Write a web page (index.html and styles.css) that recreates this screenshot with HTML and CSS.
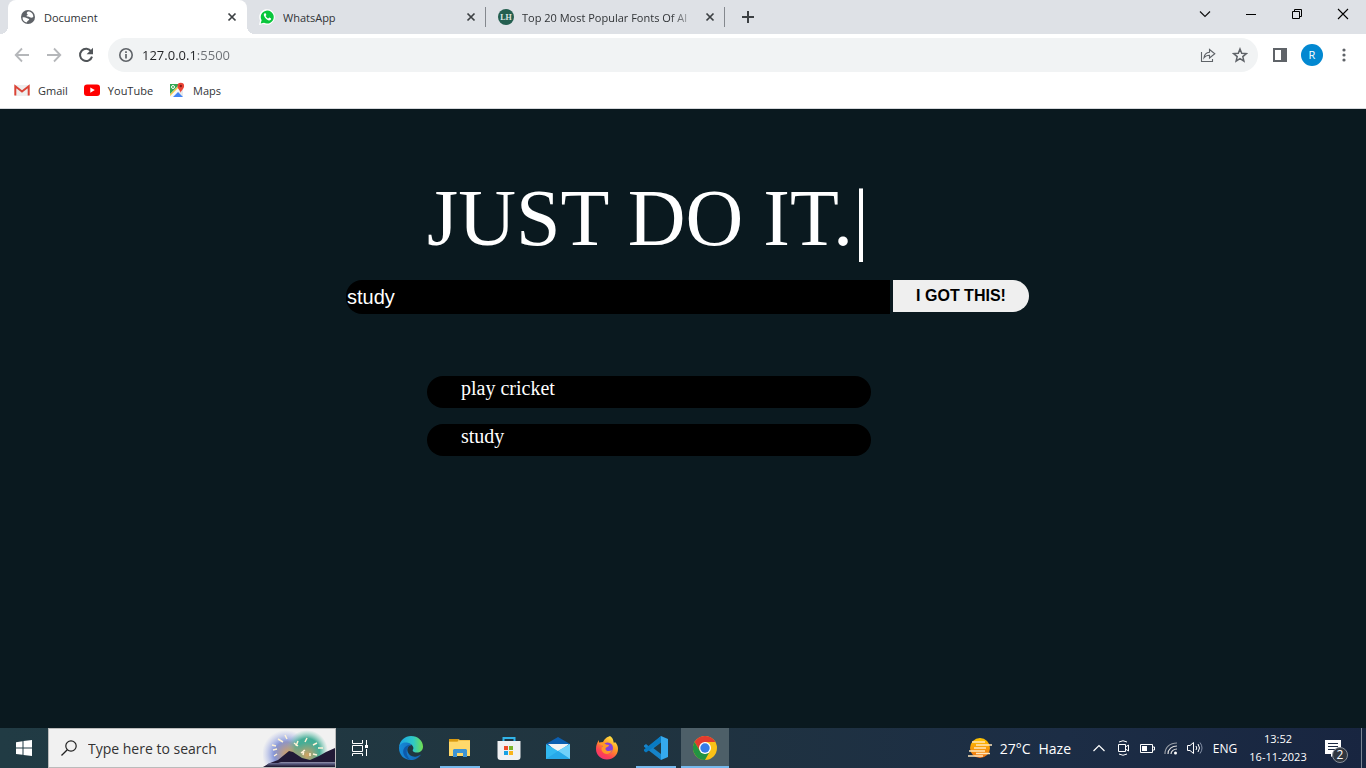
FILE: index.html
```html
<!DOCTYPE html>
<html lang="en">
<head>
<meta charset="utf-8">
<title>Document</title>
<link rel="stylesheet" href="styles.css">
</head>
<body>
<header class="browser">
  <div class="tabstrip">
    <div class="tab tab-active">
      <svg class="icon16" viewBox="0 0 16 16"><circle cx="8" cy="8" r="7" fill="#5f6368"/><path d="M2.500 8.500C4 8.200 5.500 8.300 6.500 9s1.700.4 2.500 1-.6 1.400-1.300 1.900-.7 1.100-1.200 1.500C4 12.800 2.500 11 2.500 8.500zM8 2.500c-1 .8-1.800 1.600-.9 2.200 1 .6.500 1.500-.4 1.700-.7.400.2 1.100 1.200 1 1.300-.1 1.900.9 2.800 1.200.9.300 1.700-.3 2.600-.6C13.500 5 11.500 2.500 8 2.500z" fill="#fff"/></svg>
      <span class="tab-title">Document</span>
      <button class="tab-close" aria-label="Close Document"><svg class="icon16" viewBox="0 0 16 16"><path d="M4.500 4.500l7 7m0-7l-7 7" stroke="#3c4043" stroke-width="1.700"/></svg></button>
    </div>
    <div class="tab">
      <svg class="icon16" viewBox="0 0 16 16"><path d="M0 16l1-4.500A7.800 7.800 0 1 1 4.500 15z" fill="#fff"/><path d="M1.700 14.500l.9-3.200A6.500 6.500 0 1 1 5 13.700z" fill="#09c63c"/><path d="M5.700 4.200c-1 .6-1.100 1.700-.6 2.800 1 2.200 2.500 3.700 4.700 4.400 1.100.3 2.400-.6 2.300-1.900L10.300 8.500l-1 1.100c-1.200-.4-2.200-1.400-2.700-2.600l.8-.9-.8-1.900z" fill="#fff"/></svg>
      <span class="tab-title">WhatsApp</span>
      <button class="tab-close" aria-label="Close WhatsApp"><svg class="icon16" viewBox="0 0 16 16"><path d="M4.500 4.500l7 7m0-7l-7 7" stroke="#3c4043" stroke-width="1.700"/></svg></button>
    </div>
    <div class="tab">
      <svg class="icon16" viewBox="0 0 16 16"><circle cx="8" cy="8" r="8" fill="#245f50"/><text class="lh" x="8" y="11" text-anchor="middle">LH</text></svg>
      <span class="tab-title tab-fade">Top 20 Most Popular Fonts Of Al</span>
      <button class="tab-close" aria-label="Close fonts tab"><svg class="icon16" viewBox="0 0 16 16"><path d="M4.500 4.500l7 7m0-7l-7 7" stroke="#3c4043" stroke-width="1.700"/></svg></button>
    </div>
    <button class="tab-new" aria-label="New tab"><svg class="icon16" viewBox="0 0 16 16"><path d="M8 2v12M2 8h12" stroke="#3c4043" stroke-width="2"/></svg></button>
    <div class="window-controls">
      <button aria-label="Search tabs"><svg class="icon16" viewBox="0 0 16 16"><path d="M3 5.500l5 5 5-5" fill="none" stroke="#111" stroke-width="1.200"/></svg></button>
      <button aria-label="Minimize"><svg class="icon16" viewBox="0 0 16 16"><path d="M3 8.500h10" stroke="#000"/></svg></button>
      <button aria-label="Restore"><svg class="icon16" viewBox="0 0 16 16"><path d="M3.500 5.500h7v7h-7zM5.500 5V3.500h7v7H11" fill="none" stroke="#000"/></svg></button>
      <button aria-label="Close"><svg class="icon16" viewBox="0 0 16 16"><path d="M3 3l10 10M13 3L3 13" stroke="#000" stroke-width="1.100"/></svg></button>
    </div>
  </div>
  <nav class="toolbar" aria-label="Browser">
    <button class="tool" aria-label="Back"><svg class="icon16" viewBox="0 0 16 16"><path d="M15 8H2M8 1.500L1.700 8 8 14.500" fill="none" stroke="#b5b7ba" stroke-width="1.800"/></svg></button>
    <button class="tool" aria-label="Forward"><svg class="icon16" viewBox="0 0 16 16"><path d="M1 8h13M8 1.500L14.300 8 8 14.500" fill="none" stroke="#b5b7ba" stroke-width="1.800"/></svg></button>
    <button class="tool" aria-label="Reload"><svg class="icon16" viewBox="0 0 16 16"><path d="M13.200 4.500A6.100 6.100 0 1 0 14 9.600" fill="none" stroke="#505458" stroke-width="2"/><path d="M15 .8v6.400H8.600z" fill="#505458"/></svg></button>
    <div class="omnibox">
      <svg class="icon16" viewBox="0 0 16 16"><circle cx="8" cy="8" r="6.200" fill="none" stroke="#5f6368" stroke-width="1.600"/><path d="M8 7v4.500M8 4.300v1.700" stroke="#5f6368" stroke-width="1.700"/></svg>
      <input class="address" type="text" aria-label="Address" value="127.0.0.1:5500">
      <button class="tool" aria-label="Share"><svg class="icon16" viewBox="0 0 16 16"><path d="M1.500 5v9.500h11V12M4 10.800c.4-3.500 2.300-5.300 5.500-5.500V2.500l5.300 4.300-5.300 4.200V8.200C7 8.200 5.300 9 4 10.800z" fill="none" stroke="#5f6368" stroke-width="1.100"/></svg></button>
      <button class="tool" aria-label="Bookmark"><svg class="icon16" viewBox="0 0 16 16"><path d="M8 2l1.700 4.300 4.600.3-3.500 3 1.100 4.500L8 11.600l-3.900 2.500 1.100-4.500-3.500-3 4.600-.3z" fill="none" stroke="#5f6368" stroke-width="1.500"/></svg></button>
    </div>
    <button class="tool" aria-label="Side panel"><svg class="icon16" viewBox="0 0 16 16"><path d="M1 1h14v14H1zM3 3v10h6V3z" fill="#5f6368" fill-rule="evenodd"/></svg></button>
    <button class="tool" aria-label="Profile"><span class="avatar">R</span></button>
    <button class="tool" aria-label="Menu"><svg class="icon16" viewBox="0 0 16 16"><g fill="#5f6368"><circle cx="8" cy="3" r="1.600"/><circle cx="8" cy="8" r="1.600"/><circle cx="8" cy="13" r="1.600"/></g></svg></button>
  </nav>
  <nav class="bookmarks" aria-label="Bookmarks">
    <a href="#gmail"><svg class="icon16" viewBox="0 0 16 16"><path d="M1 3h14v11H1z" fill="#eee"/><path d="M1.300 13.500V4.300L8 9.500l6.700-5.200v9.200" fill="none" stroke="#db4437" stroke-width="2"/></svg>Gmail</a>
    <a href="#youtube"><svg class="icon16" viewBox="0 0 16 16"><rect y="2.500" width="16" height="11.500" rx="3" fill="#f00"/><path d="M6.300 5.500v5.200L10.800 8z" fill="#fff"/></svg>YouTube</a>
    <a href="#maps"><svg class="icon16" viewBox="0 0 16 16"><rect x="1" y="2" width="13" height="13" rx="1" fill="#e8eaed"/><path d="M1 2h10L1 12z" fill="#34a853"/><path d="M3 15l5.500-5.500L14 15z" fill="#4285f4"/><path d="M1 12.500L10.500 3l1.500 1.500L1.500 15H1z" fill="#fbc02d"/><path d="M1 14L9 6l2 2-7 7H1z" fill="#f6f7f8"/><circle cx="4" cy="5" r="1.500" fill="none" stroke="#fff"/><path d="M11.700 11C11.500 8.500 8.500 7 8.500 4a3.300 3.300 0 0 1 6.600 0c0 3-3.200 4.500-3.400 7z" fill="#ea4335"/><circle cx="11.800" cy="4" r="1.200" fill="#891a15"/></svg>Maps</a>
  </nav>
</header>

<main class="page">
  <div class="todo">
    <h1 class="headline">JUST DO IT.|</h1>
    <form class="entry">
      <input class="entry-text" type="text" aria-label="Task" value="study">
      <button class="entry-add" type="button">I GOT THIS!</button>
    </form>
    <ul class="tasks">
      <li>play cricket</li>
      <li>study</li>
    </ul>
  </div>
</main>

<footer class="taskbar">
  <button class="start" aria-label="Start"><svg class="icon16" viewBox="0 0 16 16"><path d="M0 2.200l6.500-1V7.500H0zM7.500 1L16 0v7.500H7.500zM0 8.500h6.500v6.300L0 13.900zM7.500 8.500H16V16l-8.500-1.100z" fill="#fff"/></svg></button>
  <label class="search">
    <svg class="icon16" viewBox="0 0 16 16"><circle cx="10" cy="6" r="5.200" fill="none" stroke="#222" stroke-width="1.200"/><path d="M6.300 9.700L.5 15.500" stroke="#222" stroke-width="1.300"/></svg>
    <input type="text" aria-label="Search" placeholder="Type here to search">
    <svg class="fireworks" viewBox="0 0 72 38">
      <defs>
        <radialGradient id="blue"><stop offset=".5" stop-color="#8294d9"/><stop offset="1" stop-color="#a9b4e8" stop-opacity="0"/></radialGradient>
        <radialGradient id="green"><stop offset=".6" stop-color="#45ad96"/><stop offset="1" stop-color="#74c7b3" stop-opacity="0"/></radialGradient>
        <radialGradient id="glow"><stop offset="0" stop-color="#d6a35f"/><stop offset="1" stop-color="#c79a6d" stop-opacity="0"/></radialGradient>
        <linearGradient id="lake" x2="0" y2="1"><stop stop-color="#6d7096"/><stop offset="1" stop-color="#171329"/></linearGradient>
      </defs>
      <circle cx="23" cy="25" r="24" fill="url(#blue)"/><circle cx="44" cy="22" r="21" fill="url(#green)"/><circle cx="25" cy="25" r="15" fill="url(#glow)"/><circle cx="44" cy="26" r="13" fill="url(#glow)"/>
      <path d="M0 38l7-4 8-3 11-9 4 1 9 6 8 2 9-4 7-4 9-4v19z" fill="#211a36"/>
      <path d="M6 34h66v4H2z" fill="url(#lake)"/><path d="M18 33h54v1H15z" fill="#8585a0"/>
      <path d="M15 10l5 3M9 16l4 1M10 21l4-1M11 27l3-2M22 6l2 4M44 9l-2 4M54 14l-4 2M60 19h-5M54 26l-4-1M31 14l4 3M35 12l-2 5M38 24l4-3M41 21l-1 5M47 24v3" stroke="#fff3d7" stroke-width="1.500"/>
    </svg>
  </label>
  <div class="apps">
    <button class="app" aria-label="Task view"><svg class="icon24" viewBox="0 0 24 24"><path d="M4.500 4v3.500h10V4M4.500 9.500h10v6h-10zM4.500 20v-2.500h10V20M18.500 4v5M18.500 13v7" fill="none" stroke="#fff"/><path d="M17 9h3v3h-3z" fill="#fff"/></svg></button>
    <button class="app app-first" aria-label="Edge"><svg class="icon24" viewBox="0 0 24 24"><defs><linearGradient id="edgeTop"><stop stop-color="#1aa4e8"/><stop offset=".6" stop-color="#2fc9c5"/><stop offset="1" stop-color="#72e04f"/></linearGradient><linearGradient id="edgeBase"><stop stop-color="#168bd9"/><stop offset="1" stop-color="#1260ae"/></linearGradient></defs><path d="M0 11C1 4 6 0 12 0c7 0 12 5 12 10.500 0 4-3 6-6 6-3.500 0-5-1.500-4-3 1.500-2-1-6-5.500-6C4 7.500 1 9 0 11z" fill="url(#edgeTop)"/><path d="M0 12c0-4 4-6 8-5.500 2.500.3 4 1.500 4.500 2.500-3 0-4.500 3-4 6 .8 4 5 6.500 9 5.500 1.800-.4 3.500-1.500 4.500-2C20 22 16 24 12 24 5 24 0 19 0 12z" fill="url(#edgeBase)"/><path d="M12.300 9.200c-5 .3-7 8.800-.8 14.800-4.500-1-8.500-5.500-7-10.500 1-3 4.500-5 7.800-4.300z" fill="#0d5aab"/></svg></button>
    <button class="app app-open" aria-label="File Explorer"><svg class="icon24" viewBox="0 0 24 24"><path d="M1 3h9l2 1h10v16H1z" fill="#f5c34b"/><path d="M1 3h9v2.500H1z" fill="#d99a10"/><path d="M1 6h8l2-1h11v15H1z" fill="#ffd96b"/><path d="M5 21v-7l1-1h12l1 1v7h-4v-4H9v4z" fill="#3d94d5"/></svg></button>
    <button class="app" aria-label="Store"><svg class="icon24" viewBox="0 0 24 24"><path d="M6.500 6V2h11v4" fill="none" stroke="#31b4e8" stroke-width="2"/><path d="M.5 5h23v16a3 3 0 0 1-3 3h-17a3 3 0 0 1-3-3z" fill="#f0f1f3"/><path d="M7 10h4v4H7z" fill="#ee4b28"/><path d="M12 10h4v4h-4z" fill="#7cb52b"/><path d="M7 15h4v4H7z" fill="#19a2e5"/><path d="M12 15h4v4h-4z" fill="#f9b51c"/></svg></button>
    <button class="app" aria-label="Mail"><svg class="icon24" viewBox="0 0 24 24"><path d="M0 8L12 1l12 7-12 9z" fill="#0c5fb1"/><path d="M2 8h21L12 17z" fill="#f4f4f4"/><path d="M0 8l12 7 12-7v15H0z" fill="#32b8f0"/><path d="M24 8l-12 7 12 8z" fill="#71d2fa"/><path d="M0 23L12 15l12 8z" fill="#27a9e8"/></svg></button>
    <button class="app" aria-label="Firefox"><svg class="icon24" viewBox="0 0 24 24"><defs><linearGradient id="fox" x1=".8" y1="0" x2=".2" y2="1"><stop stop-color="#fff04a"/><stop offset=".4" stop-color="#ff9b24"/><stop offset=".75" stop-color="#ff4054"/><stop offset="1" stop-color="#ee3477"/></linearGradient></defs><path d="M15 0c4 3 3 5 4 7l1-1c2 2 3 4 3 7 0 6-5 10.500-11 10.500S1 19 1 13c0-4 1-6 3-9v3l4-1c2-3 2-4 7-6z" fill="url(#fox)"/><circle cx="12.500" cy="12" r="5.500" fill="#8441db"/><path d="M3 7c3-1 6-.5 8 1.500l3 .5c0 2-3 2-3.500 3.500C10 15 14 16 17 14c-1.500 5-8 5-10 1-1-2-.5-4 1-5z" fill="#ff9927"/></svg></button>
    <button class="app app-open" aria-label="Visual Studio Code"><svg class="icon24" viewBox="0 0 24 24"><path d="M17 0L5 10.500 2 8 0 9.500v1.200L17 24z" fill="#1684ca"/><path d="M17 0L0 13.500V15l2 1.500L17 6z" fill="#087bc3"/><path d="M17 0l7 3v18l-7 3z" fill="#35a9ed"/><path d="M17 6.500V18L9.500 12.200z" fill="#203b47"/></svg></button>
    <button class="app app-current" aria-label="Chrome"><svg class="icon24" viewBox="0 0 24 24"><circle cx="12" cy="12" r="12" fill="#fbc116"/><path d="M1.600 6A12 12 0 0 1 22.400 6H12L7 15z" fill="#e33b2e"/><path d="M1.600 6A12 12 0 0 0 12 24l5-9-5 3-5-3z" fill="#229342"/><circle cx="12" cy="12" r="6" fill="#fff"/><circle cx="12" cy="12" r="4.700" fill="#357ce8"/></svg></button>
  </div>
  <div class="tray">
    <button class="weather"><svg class="icon24" viewBox="0 0 24 24"><defs><linearGradient id="sun" x2="0" y2="1"><stop stop-color="#ffc600"/><stop offset="1" stop-color="#ef7116"/></linearGradient></defs><circle cx="12" cy="12" r="10" fill="url(#sun)"/><path d="M4 6h13M8 9h16M6 12h12M1 15h16M8 17.500h14M0 20h15" stroke="#ffe6bb" stroke-width="1.400"/></svg><span>27°C</span><span>Haze</span></button>
    <button class="status" aria-label="Hidden icons"><svg class="icon16" viewBox="0 0 16 16"><path d="M2.500 11L8 5.500l5.500 5.500" fill="none" stroke="#fff" stroke-width="1.200"/></svg></button>
    <button class="status" aria-label="Meet now"><svg class="icon16" viewBox="0 0 16 16"><path d="M3.500 4.500h7v7h-7zM10.500 7l3-2v6l-3-2M4 2Q8-.5 12 2M4 14q4 2.500 8 0" fill="none" stroke="#fff"/></svg></button>
    <button class="status" aria-label="Battery"><svg class="icon16" viewBox="0 0 16 16"><path d="M1.500 4.500h12v8h-12zM14 7h1.500v3H14" fill="none" stroke="#fff"/><path d="M3 6h5v5H3z" fill="#fff"/></svg></button>
    <button class="status" aria-label="Wi-Fi"><svg class="icon16" viewBox="0 0 16 16"><g fill="none" stroke="#ddd" stroke-width="1.200"><path d="M2 14C2 7 7 3 14 3" opacity=".65"/><path d="M5 14c0-5 4-8 9-8M8 14c0-3 3-5 6-5"/></g><circle cx="12.500" cy="13" r="1.500" fill="#fff"/></svg></button>
    <button class="status" aria-label="Volume"><svg class="icon16" viewBox="0 0 16 16"><path d="M.5 5.500h2.500l3.500-3v11L3 10.500H.5zM9 6q1.500 2 0 4M11 4q3 4 0 8" fill="none" stroke="#fff"/><path d="M13 2.500q4 5.500 0 11" fill="none" stroke="#8490a6"/></svg></button>
    <button class="language">ENG</button>
    <button class="clock"><time>13:52</time><span>16-11-2023</span></button>
    <button class="notices" aria-label="Notifications, 2 new"><svg class="icon24" viewBox="0 0 24 24"><path d="M0 4h16v14h-6l-4 3v-3H0z" fill="#fff"/><path d="M3 7.500h10M3 10.500h10M3 13.500h7" stroke="#1c2a43"/></svg><span class="badge">2</span></button>
    <span class="show-desktop"></span>
  </div>
</footer>
</body>
</html>
```
FILE: styles.css
```css
* { box-sizing: border-box; }
body {
  margin: 0;
  min-height: 100vh;
  display: flex;
  flex-direction: column;
  background: #0a191f;
  font-family: "Open Sans", "Noto Sans", sans-serif;
  font-size: 12px;
}
button, input { font: inherit; color: inherit; border: 0; padding: 0; background: none; outline: 0; min-width: 0; }
button { display: flex; align-items: center; justify-content: center; }
svg { display: block; flex: none; }
.icon16 { width: 16px; height: 16px; }
.icon24 { width: 24px; height: 24px; }

.browser { background: #fff; color: #303336; border-bottom: 1px solid #d5d8dc; font-size: 11px; }
.tabstrip { display: flex; height: 34px; padding-left: 8px; background: #dee1e6; }
.tab { position: relative; display: flex; align-items: center; gap: 8px; flex: 0 1 239px; min-width: 0; padding: 0 7px 0 12px; }
.tab + .tab:not(.tab-active)::after { content: ""; position: absolute; right: 0; top: 7px; width: 1px; height: 20px; background: #84888e; }
.tab-active { background: #fff; border-radius: 8px 8px 0 0; }
.tab-active::before, .tab-active::after { content: ""; position: absolute; bottom: 0; width: 8px; height: 8px; }
.tab-active::before { right: 100%; background: radial-gradient(circle at 0 0, transparent 8px, #fff 8px); }
.tab-active::after { left: 100%; background: radial-gradient(circle at 100% 0, transparent 8px, #fff 8px); }
.tab-title { flex: 1; overflow: hidden; white-space: nowrap; }
.tab-fade { -webkit-mask-image: linear-gradient(to right, #000 148px, transparent 176px); mask-image: linear-gradient(to right, #000 148px, transparent 176px); }
.lh { font: bold 8px "Liberation Serif", serif; fill: #dce8e2; }
.tab-new { width: 46px; }
.window-controls { display: flex; height: 28px; margin-left: auto; }
.window-controls button { width: 46px; }

.toolbar { display: flex; align-items: center; height: 38px; padding: 4px 6px 0; }
.tool { width: 32px; height: 32px; flex: none; }
.omnibox { display: flex; align-items: center; flex: 1; height: 34px; margin: 0 6px; padding: 0 2px 0 10px; border-radius: 17px; background: #f1f3f4; }
.address { flex: 1; margin-left: 8px; font-size: 13px; color: transparent; background: linear-gradient(to right, #202124 55px, #6b6f74 55px); -webkit-background-clip: text; background-clip: text; }
.avatar { width: 22px; height: 22px; border-radius: 50%; background: #0288d1; color: #fff; line-height: 22px; text-align: center; }
.bookmarks { display: flex; align-items: center; gap: 16px; height: 36px; padding: 0 14px; }
.bookmarks a { display: flex; align-items: center; gap: 8px; color: inherit; text-decoration: none; }

.page { flex: 1; padding: 65px 0 0 9px; color: #fff; }
.todo { max-width: 683px; margin: 0 auto; }
.headline { margin: 0 0 18px; padding-left: 81px; font: 80px/88px "Liberation Serif", serif; white-space: nowrap; }
.entry { display: flex; align-items: flex-start; gap: 3px; }
.entry-text { flex: 1; height: 34px; padding: 0 1px; border-radius: 16px 0 0 16px; background: #000; font: 20px "Liberation Sans", sans-serif; }
.entry-add { width: 136px; height: 32px; border-radius: 0 16px 16px 0; background: #efefef; color: #000; font: bold 16px "Liberation Sans", sans-serif; }
.tasks { display: grid; gap: 16px; max-width: 444px; margin: 62px 0 0 81px; padding: 0; list-style: none; }
.tasks li { height: 32px; padding-left: 34px; border-radius: 16px; background: #000; font: 20px/25px "Liberation Serif", serif; }

.taskbar { display: flex; height: 40px; background: linear-gradient(to right, #213b44, #20343f 45%, #1c2d45 78%, #182540); color: #fff; }
.start { width: 48px; }
.search { display: flex; align-items: center; width: 288px; padding-left: 12px; border: 1px solid #bbb; background: #f1f1f1; color: #222; }
.search input { flex: 1; margin-left: 11px; font-size: 14px; }
.search input::placeholder { color: #333; opacity: 1; }
.fireworks { width: 72px; height: 38px; }
.apps { display: flex; gap: 1px; }
.app { width: 48px; height: 40px; }
.app-first { margin-left: 2px; }
.app-open { background: linear-gradient(#76b9ed, #76b9ed) 50% 100% / 40px 2px no-repeat; }
.app-current { background: linear-gradient(#76b9ed, #76b9ed) 50% 100% / 48px 2px no-repeat #4d5f68; }
.tray { display: flex; margin-left: auto; }
.weather { gap: 8px; margin-right: 16px; font-size: 14px; }
.status { width: 24px; }
.language { width: 36px; }
.clock { flex-direction: column; width: 70px; font-size: 11px; line-height: 18px; }
.notices { position: relative; width: 48px; }
.badge { position: absolute; right: 13px; bottom: 5px; width: 16px; height: 16px; border: 1px solid #89909a; border-radius: 50%; background: #30363f; line-height: 14px; }
.show-desktop { width: 5px; border-left: 1px solid #7b8493; }
```
